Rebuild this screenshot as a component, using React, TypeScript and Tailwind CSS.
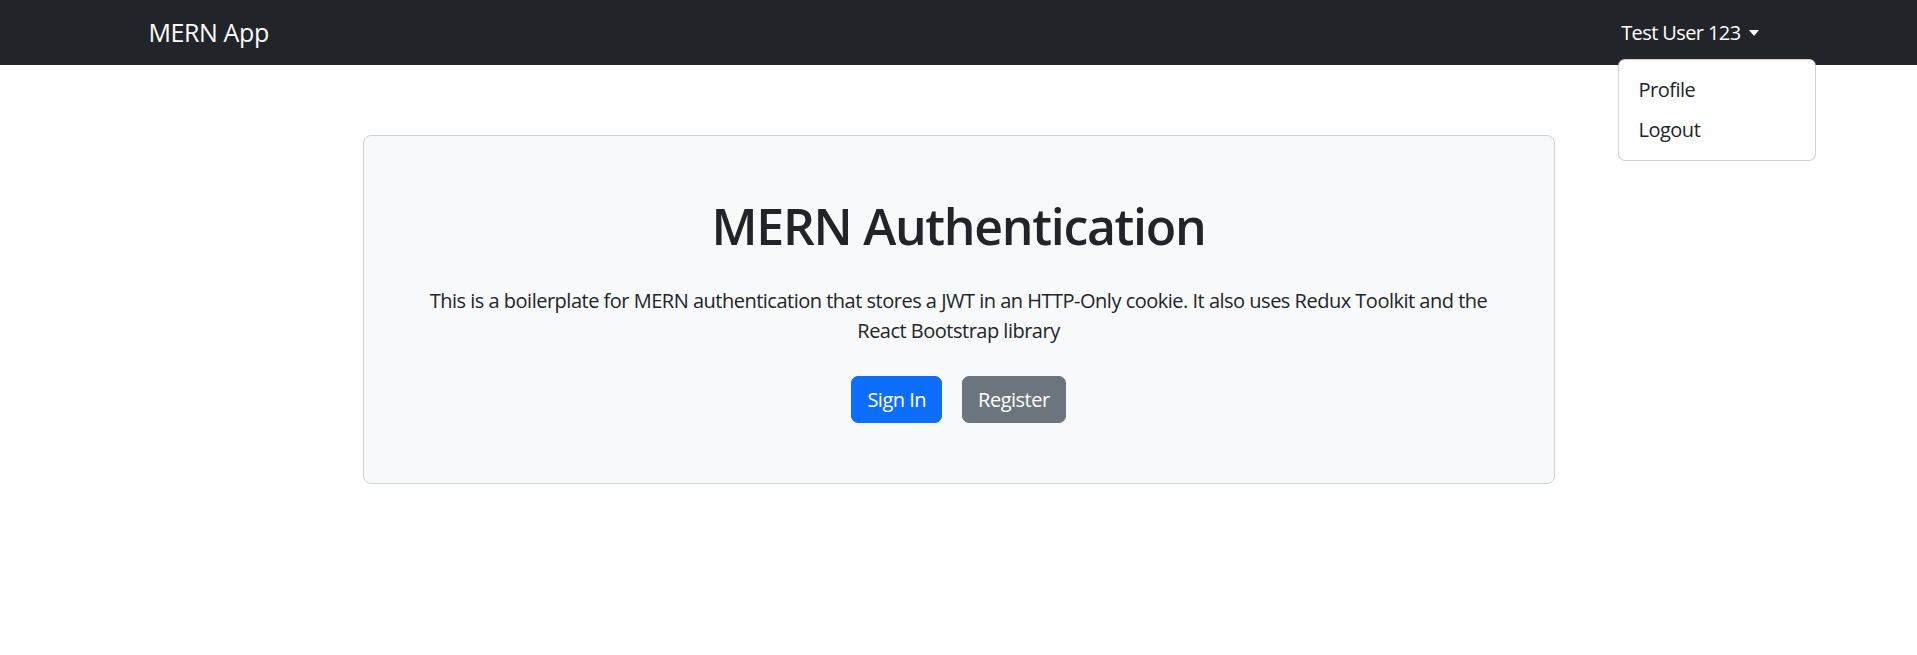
import { useState } from "react";

function Header() {
  const [open] = useState(true);

  return (
    <header className="bg-[#212529] h-[65px]">
      <div className="w-[1650px] h-full mx-auto px-[15px] flex items-center justify-between">
        <a href="#" className="text-white text-[25px] leading-[37px] tracking-[-0.4px]">
          MERN App
        </a>

        <div className="relative">
          <button className="flex items-center px-[10px] py-[10px] text-white text-[20px] leading-[30px] tracking-[-0.6px]">
            Test User 123
            <span className="ml-[8px] mt-[1px] w-0 h-0 border-x-[5px] border-x-transparent border-t-[6px] border-t-white" />
          </button>

          {open && (
            <div className="absolute right-[-47px] top-[51px] w-[198px] py-[10px] bg-white border border-black/[0.175] rounded-[7px] z-10">
              <a href="#" className="block px-[20px] py-[5px] text-[20px] leading-[30px] tracking-[-0.5px] text-[#212529]">
                Profile
              </a>
              <a href="#" className="block px-[20px] py-[5px] text-[20px] leading-[30px] tracking-[-0.5px] text-[#212529]">
                Logout
              </a>
            </div>
          )}
        </div>
      </div>
    </header>
  );
}

function Hero() {
  return (
    <section className="pt-[70px] pb-[60px]">
      <div className="flex justify-center">
        <div className="w-[1192px] p-[60px] flex flex-col items-center bg-[#f8f9fa] border border-[#cfd2d5] rounded-[8px]">
          <h1 className="text-[50px] leading-[60px] font-semibold tracking-[-1.3px] text-[#212529] mb-[30px]">
            MERN Authentication
          </h1>
          <p className="text-center text-[20px] leading-[30px] tracking-[-0.5px] text-[#212529] mb-[30px]">
            <span className="whitespace-nowrap">
              This is a boilerplate for MERN authentication that stores a JWT in an HTTP-Only cookie. It also uses Redux Toolkit and the
            </span>
            <br />
            React Bootstrap library
          </p>
          <div className="flex gap-[20px]">
            <a href="#" className="px-[15px] py-[7.5px] text-[20px] leading-[30px] tracking-[-0.5px] text-white bg-[#0d6efd] border border-[#0d6efd] rounded-[7px]">
              Sign In
            </a>
            <a href="#" className="px-[15px] py-[7.5px] text-[20px] leading-[30px] tracking-[-0.5px] text-white bg-[#6c757d] border border-[#6c757d] rounded-[7px]">
              Register
            </a>
          </div>
        </div>
      </div>
    </section>
  );
}

export default function App() {
  return (
    <div className="min-h-screen bg-white font-['Segoe_UI','Open_Sans','Noto_Sans',sans-serif]">
      <Header />
      <Hero />
    </div>
  );
}
